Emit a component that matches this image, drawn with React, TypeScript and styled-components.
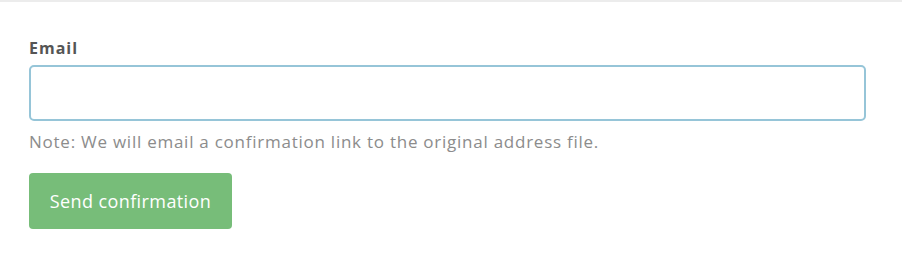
import React, { useState } from "react";
import styled, { createGlobalStyle } from "styled-components";

const GlobalStyle = createGlobalStyle`
  html, body {
    margin: 0;
    padding: 0;
    background: #ffffff;
  }
  body {
    font-family: "Open Sans", Lato, sans-serif;
  }
`;

const Page = styled.div`
  width: 902px;
  height: 266px;
  box-sizing: border-box;
  border-top: 2px solid #ececec;
  padding: 36px 36px 0 29px;
`;

const Form = styled.form`
  display: flex;
  flex-direction: column;
`;

const Label = styled.label`
  font-size: 16px;
  font-weight: 700;
  letter-spacing: 1px;
  color: #555555;
  line-height: 20px;
  margin-bottom: 7px;
`;

const Input = styled.input`
  box-sizing: border-box;
  width: 837px;
  height: 56px;
  border: 2px solid #96c5d8;
  border-radius: 5px;
  padding: 0 14px;
  font-size: 16px;
  font-family: inherit;
  outline: none;
`;

const Note = styled.p`
  margin: 10px 0 0;
  font-size: 17px;
  letter-spacing: 0.75px;
  line-height: 22px;
  color: #8c8c8c;
`;

const Button = styled.button`
  margin-top: 20px;
  align-self: flex-start;
  width: 203px;
  height: 56px;
  border: none;
  border-radius: 4px;
  background: #77bd79;
  color: #ffffff;
  font-family: inherit;
  font-size: 18px;
  letter-spacing: 0.4px;
  cursor: pointer;
`;

export default function App() {
  const [email, setEmail] = useState("");
  return (
    <>
      <GlobalStyle />
      <Page>
        <Form onSubmit={(e) => e.preventDefault()}>
          <Label htmlFor="email">Email</Label>
          <Input
            id="email"
            type="email"
            value={email}
            onChange={(e) => setEmail(e.target.value)}
          />
          <Note>Note: We will email a confirmation link to the original address file.</Note>
          <Button type="submit">Send confirmation</Button>
        </Form>
      </Page>
    </>
  );
}
